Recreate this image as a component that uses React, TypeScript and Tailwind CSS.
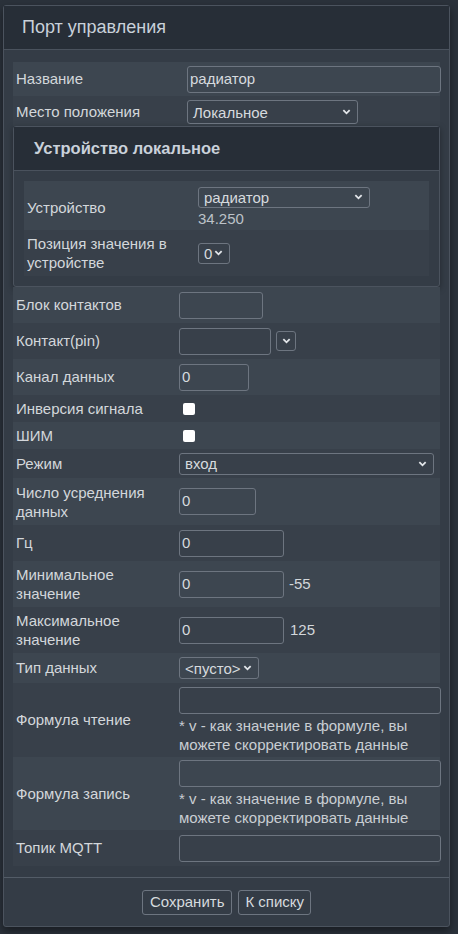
import React from "react";

const font = { fontFamily: '"Liberation Sans", Arial, sans-serif' };

function Chevron({ className = "" }: { className?: string }) {
  return (
    <svg viewBox="0 0 10 6" className={`w-[9px] h-[6px] ${className}`}>
      <path d="M1.5 1 L5 4.5 L8.5 1" fill="none" stroke="#e3e6ea" strokeWidth="2" />
    </svg>
  );
}

function Select({ value, className = "" }: { value: string; className?: string }) {
  return (
    <div
      className={`flex items-center justify-between border border-[#6d7580] rounded-[3px] pl-[5px] pr-[6px] text-[15px] text-[#d6dade] ${className}`}
    >
      <span className="leading-none">{value}</span>
      <Chevron />
    </div>
  );
}

function Input({ value = "", className = "" }: { value?: string; className?: string }) {
  return (
    <div
      className={`flex items-center border border-[#6d7580] rounded-[3px] pl-[2px] text-[15px] text-[#d6dade] h-[27px] shrink-0 ${className}`}
    >
      {value}
    </div>
  );
}

function Check() {
  return <span className="block w-[12px] h-[12px] bg-white rounded-[2px] ml-[4px]" />;
}

// lab = classes for the label cell (line-height etc.), so text lands on whole pixels
function Row({
  label,
  h,
  lab = "leading-[20px]",
  light,
  children,
}: {
  label: React.ReactNode;
  h: string;
  lab?: string;
  light: boolean;
  children?: React.ReactNode;
}) {
  return (
    <div className={`flex items-center ${h} ${light ? "bg-[#3d4650]" : "bg-[#38404a]"}`}>
      <div className={`w-[166px] shrink-0 pl-[3px] text-[15px] text-[#d3d7db] ${lab}`}>{label}</div>
      <div className="flex-1 min-w-0 flex items-center">{children}</div>
    </div>
  );
}

const Note = () => (
  <div className="text-[15px] leading-[19px] text-[#c9ced3] mt-[2px] whitespace-nowrap">
    * v - как значение в формуле, вы
    <br />
    можете скорректировать данные
  </div>
);

export default function App() {
  return (
    <div className="min-h-[934px] bg-[#2b323b] pt-[5px] px-[3px]" style={font}>
      <div className="w-[447px] border border-[#4b535e] rounded-[3px] bg-[#343c46] shadow-[0_4px_8px_rgba(0,0,0,0.45)]">
        {/* header */}
        <div className="h-[44px] flex items-center px-[18px] bg-[#272e37] border-b border-[#4a525d] text-[18px] text-[#c9d1da]">
          Порт управления
        </div>

        <div className="px-[9px] pt-[12px] pb-[11px]">
          {/* first block */}
          <div className="flex items-center h-[34px] bg-[#3d4650]">
            <div className="w-[174px] shrink-0 pl-[3px] text-[15px] leading-[20px] text-[#d3d7db]">Название</div>
            <Input value="радиатор" className="w-[254px] mr-[-1px]" />
          </div>
          <div className="flex items-start h-[30px] bg-[#38404a] pt-[4px]">
            <div className="w-[174px] shrink-0 pl-[3px] text-[15px] leading-[24px] text-[#d3d7db]">Место положения</div>
            <Select value="Локальное" className="w-[171px] h-[24px]" />
          </div>

          {/* sub panel */}
          <div className="border border-[#4b535e] rounded-[3px] bg-[#343c46] shadow-[0_2px_6px_rgba(0,0,0,0.35)]">
            <div className="h-[44px] flex items-center px-[20px] bg-[#272e37] border-b border-[#4a525d] text-[16.5px] font-bold text-[#c9d1da]">
              Устройство локальное
            </div>
            <div className="px-[10px] py-[10px]">
              <div className="flex items-center h-[49px] bg-[#3d4650]">
                <div className="w-[174px] shrink-0 pl-[3px] text-[15px] leading-[19px] pt-[4px] text-[#d3d7db]">Устройство</div>
                <div className="flex flex-col pt-[3px]">
                  <Select value="радиатор" className="w-[172px] h-[21px]" />
                  <span className="text-[15px] leading-[19px] text-[#bcc2c8] mt-[1px]">34.250</span>
                </div>
              </div>
              <div className="flex items-center h-[46px] bg-[#38404a]">
                <div className="w-[174px] shrink-0 pl-[3px] text-[15px] leading-[19px] text-[#d3d7db]">
                  Позиция значения в
                  <br />
                  устройстве
                </div>
                <Select value="0" className="w-[32px] h-[21px] pl-[4px] pr-[3px]" />
              </div>
            </div>
          </div>

          {/* main table */}
          <Row label="Блок контактов" h="h-[36px]" light>
            <Input className="w-[84px]" />
          </Row>
          <Row label="Контакт(pin)" h="h-[36px]" light={false}>
            <Input className="w-[92px]" />
            <div className="ml-[5px] w-[20px] h-[20px] border border-[#6d7580] rounded-[3px] flex items-center justify-center">
              <Chevron />
            </div>
          </Row>
          <Row label="Канал данных" h="h-[36px]" light>
            <Input value="0" className="w-[70px]" />
          </Row>
          <Row label="Инверсия сигнала" h="h-[27px]" lab="leading-[19px]" light={false}>
            <Check />
          </Row>
          <Row label="ШИМ" h="h-[27px]" lab="leading-[19px]" light>
            <Check />
          </Row>
          <Row label="Режим" h="h-[29px]" lab="leading-[19px]" light={false}>
            <Select value="вход" className="w-[255px] h-[22px] pl-[4px]" />
          </Row>
          <Row label={<>Число усреднения<br />данных</>} h="h-[47px]" lab="leading-[19px] pt-[1px]" light>
            <Input value="0" className="w-[77px]" />
          </Row>
          <Row label="Гц" h="h-[36px]" light={false}>
            <Input value="0" className="w-[105px]" />
          </Row>
          <Row label={<>Минимальное<br />значение</>} h="h-[46px]" lab="leading-[19px]" light>
            <Input value="0" className="w-[105px]" />
            <span className="ml-[5px] text-[15px] text-[#d3d7db]">-55</span>
          </Row>
          <Row label={<>Максимальное<br />значение</>} h="h-[46px]" lab="leading-[19px]" light={false}>
            <Input value="0" className="w-[105px]" />
            <span className="ml-[6px] text-[15px] text-[#d3d7db]">125</span>
          </Row>
          <Row label="Тип данных" h="h-[30px]" light>
            <Select value="<пусто>" className="w-[80px] h-[22px] pl-[5px] pr-[5px]" />
          </Row>
          <Row label="Формула чтение" h="h-[74px]" light={false}>
            <div className="flex flex-col pt-[1px]">
              <Input className="w-[262px]" />
              <Note />
            </div>
          </Row>
          <Row label="Формула запись" h="h-[73px]" lab="leading-[19px]" light>
            <div className="flex flex-col">
              <Input className="w-[262px]" />
              <Note />
            </div>
          </Row>
          <Row label="Топик MQTT" h="h-[36px]" light={false}>
            <Input className="w-[262px]" />
          </Row>
        </div>

        {/* footer */}
        <div className="h-[49px] border-t border-[#535c67] flex items-center justify-center gap-[6px]">
          <button className="h-[25px] px-[7px] border border-[#6d7580] rounded-[3px] text-[15px] text-[#d6dade]">
            Сохранить
          </button>
          <button className="h-[25px] px-[6px] border border-[#6d7580] rounded-[3px] text-[15px] text-[#d6dade]">
            К списку
          </button>
        </div>
      </div>
    </div>
  );
}
